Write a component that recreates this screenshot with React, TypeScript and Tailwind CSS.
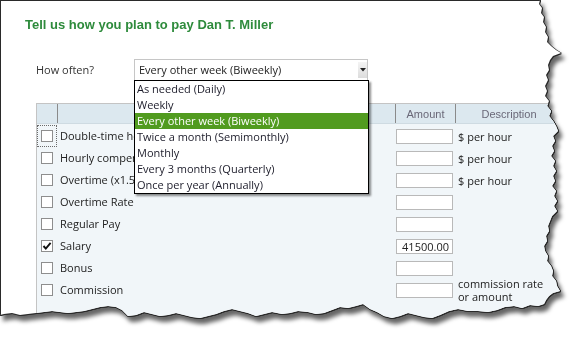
import { Fragment } from 'react';

const options = [
  'As needed (Daily)',
  'Weekly',
  'Every other week (Biweekly)',
  'Twice a month (Semimonthly)',
  'Monthly',
  'Every 3 months (Quarterly)',
  'Once per year (Annually)',
];

const rows: { label: string; checked?: boolean; value?: string; desc?: string }[] = [
  { label: 'Double-time hourly', desc: '$ per hour' },
  { label: 'Hourly compensation', desc: '$ per hour' },
  { label: 'Overtime (x1.5) hourly', desc: '$ per hour' },
  { label: 'Overtime Rate' },
  { label: 'Regular Pay' },
  { label: 'Salary', checked: true, value: '41500.00' },
  { label: 'Bonus' },
  { label: 'Commission', desc: 'commission rate\nor amount' },
];

function Checkbox({ checked }: { checked?: boolean }) {
  return (
    <div className="w-[12px] h-[12px] border border-[#8e8e8e] bg-white flex items-center justify-center">
      {checked && (
        <svg width="10" height="10" viewBox="0 0 10 10">
          <path d="M1.5 5 L3.8 7.6 L8.6 1.8" fill="none" stroke="#111" strokeWidth="1.9" />
        </svg>
      )}
    </div>
  );
}

export default function App() {
  return (
    <div className="w-[584px] h-[348px] bg-white overflow-hidden font-['Open_Sans',sans-serif] text-[11px] text-[#222]">
      <div className="[filter:drop-shadow(1px_0_0_#2a2a2a)_drop-shadow(0_1px_0_#2a2a2a)_drop-shadow(3px_5px_2px_rgba(0,0,0,0.6))]">
        <div className="relative w-[562px] h-[322px] bg-white border-l border-t border-[#2a2a2a] flex flex-col [clip-path:polygon(0px_0px,540px_0px,539px_4px,542px_8px,541px_13px,544px_17px,543px_22px,546px_27px,545px_32px,548px_37px,547px_42px,551px_46px,556px_50px,561px_53px,553px_56px,550px_60px,548px_65px,549px_70px,546px_75px,548px_80px,545px_86px,547px_91px,545px_96px,549px_101px,547px_106px,551px_111px,549px_116px,553px_121px,556px_126px,558px_131px,553px_136px,555px_141px,552px_146px,554px_151px,551px_156px,555px_161px,553px_166px,556px_171px,553px_176px,555px_181px,552px_186px,556px_191px,554px_196px,557px_201px,554px_206px,557px_211px,552px_216px,550px_221px,548px_226px,549px_231px,546px_236px,547px_241px,544px_246px,545px_251px,548px_256px,547px_261px,551px_266px,553px_271px,552px_276px,556px_281px,557px_286px,560px_291px,553px_293px,549px_296px,546px_300px,544px_304px,538px_306px,530px_305px,522px_308px,514px_306px,505px_307px,497px_310px,488px_312px,478px_311px,468px_311px,458px_309px,449px_311px,440px_315px,432px_318px,424px_317px,416px_315px,408px_313px,400px_316px,392px_318px,384px_316px,377px_312px,370px_309px,363px_304px,356px_306px,348px_308px,340px_307px,332px_310px,324px_313px,316px_314px,308px_312px,298px_311px,290px_313px,282px_314px,272px_312px,264px_314px,256px_316px,248px_313px,240px_311px,232px_309px,224px_311px,216px_314px,208px_316px,200px_318px,192px_317px,184px_315px,176px_313px,168px_315px,160px_316px,152px_314px,144px_312px,136px_315px,128px_316px,122px_310px,116px_307px,108px_306px,100px_307px,92px_309px,84px_311px,76px_312px,68px_313px,60px_312px,52px_311px,44px_312px,36px_313px,28px_314px,20px_315px,12px_313px,4px_314px,0px_315px)]">
          {/* Title */}
          <h1 className="mt-[16px] pl-[24px] leading-[16px] text-[13px] font-bold text-[#2e8b3c] font-['Liberation_Sans',Arial,sans-serif]">
            Tell us how you plan to pay Dan T. Miller
          </h1>

          {/* How often */}
          <div className="mt-[26px] ml-[35px] flex items-center h-[22px]">
            <div className="w-[98px] text-[#333]">How often?</div>
            <div className="w-[234px] h-[22px] border border-[#c6c6c6] bg-white flex items-center pl-[4px] relative">
              <span>Every other week (Biweekly)</span>
              <div className="absolute right-0 top-[2px] w-[9px] h-[16px] bg-gradient-to-b from-[#f4f4f4] to-[#dcdcdc] flex items-center justify-center">
                <svg width="6" height="4" viewBox="0 0 6 4">
                  <path d="M0 0 H6 L3 3.5 Z" fill="#222" />
                </svg>
              </div>
            </div>
          </div>

          {/* Table */}
          <div className="mt-[22px] ml-[35px] flex-1 flex flex-col border-l border-t border-[#c4c4c4] bg-[#f1f6f9]">
            <div className="grid grid-cols-[20px_338px_60px_1fr] h-[20px] bg-[#dce8ef] border-b border-[#cfdbe2] text-[#6a6878] font-['Liberation_Sans',Arial,sans-serif]">
              <div />
              <div className="border-l border-[#8a8a8a]" />
              <div className="border-l border-[#8a8a8a] flex items-center justify-center pt-[1px]">Amount</div>
              <div className="border-l border-[#8a8a8a] flex items-center justify-center pt-[1px]">Description</div>
            </div>
            <div className="pt-[1px] grid grid-cols-[20px_338px_60px_1fr] auto-rows-[22px]">
              {rows.map((r, i) => (
                <Fragment key={r.label}>
                  <div
                    className={`flex items-center ${
                      i === 0 ? 'border border-dotted border-[#6a6a6a] pl-[3px]' : 'pl-[4px]'
                    }`}
                  >
                    <Checkbox checked={r.checked} />
                  </div>
                  <div className="flex items-center pl-[3px] whitespace-nowrap">{r.label}</div>
                  <div className="flex items-center pl-[1px]">
                    <div className="w-[57px] h-[15px] border border-[#b9b9b9] bg-white flex items-center justify-end pr-[3px] leading-none">
                      {r.value}
                    </div>
                  </div>
                  <div className="flex items-center pl-[3px] leading-[13px] whitespace-pre-line">{r.desc}</div>
                </Fragment>
              ))}
            </div>
          </div>

          {/* Dropdown list, open over the table */}
          <div className="absolute left-[133px] top-[79px] w-[235px] border border-black bg-white shadow-[2px_2px_2px_rgba(0,0,0,0.45)] text-[#1c1c2a]">
            {options.map((o, i) => (
              <div
                key={o}
                className={`h-[16px] leading-[16px] pl-[2px] whitespace-nowrap ${
                  i === 2 ? 'bg-[#519b1f] text-white' : ''
                }`}
              >
                {o}
              </div>
            ))}
          </div>
        </div>
      </div>
    </div>
  );
}
